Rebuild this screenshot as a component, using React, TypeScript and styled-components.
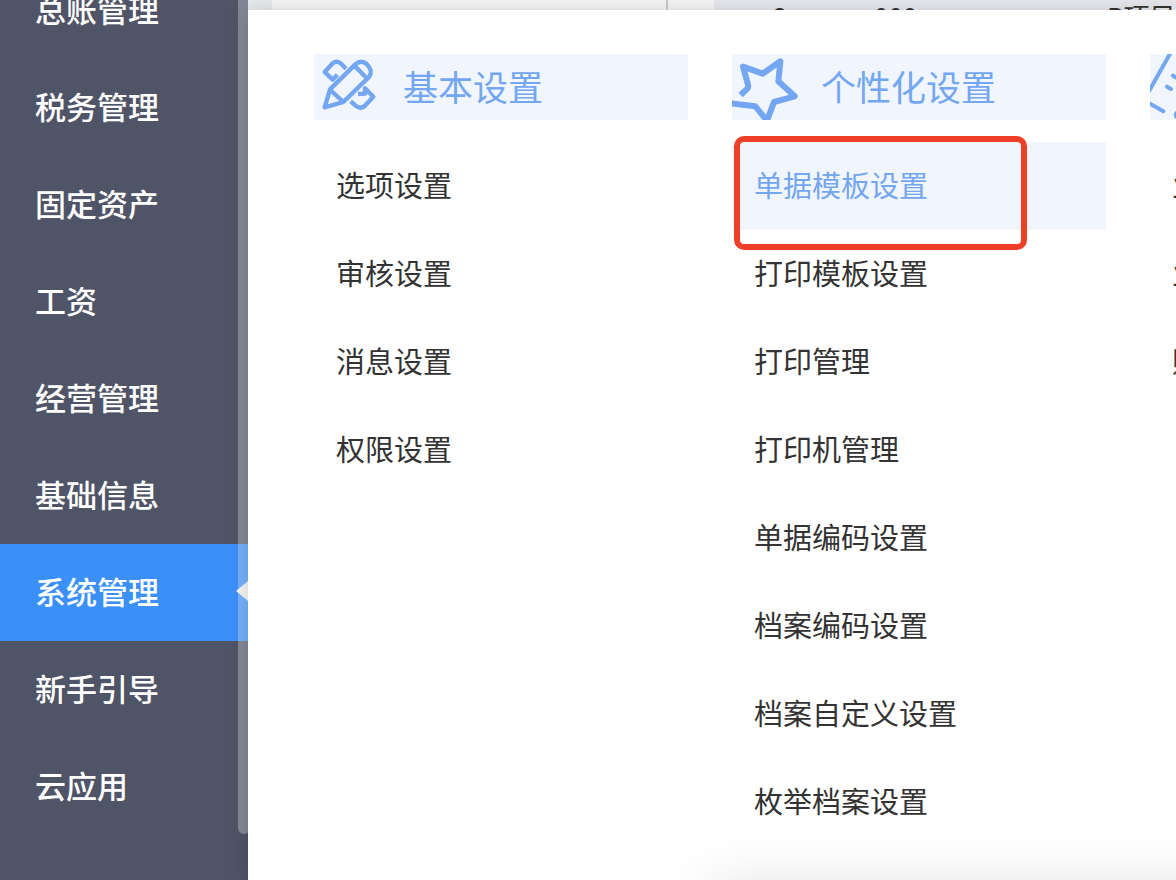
import React from 'react';
import styled, { createGlobalStyle } from 'styled-components';

const GlobalStyle = createGlobalStyle`
  * { box-sizing: border-box; }
  body {
    margin: 0;
    background: #fff;
    color: #333;
    font-family: "Noto Sans CJK SC", "Liberation Sans", sans-serif;
  }
  ul { list-style: none; margin: 0; padding: 0; }
  a { color: inherit; text-decoration: none; }
`;

const Shell = styled.div`
  display: flex;
  height: 100vh;
  overflow: hidden;
`;

const Sidebar = styled.nav`
  position: relative;
  flex: 0 0 248px;
  overflow: hidden;
  background: #505467;
`;

const NavList = styled.ul`
  margin-top: -38px;
`;

const NavLink = styled.a<{ $active?: boolean }>`
  position: relative;
  display: flex;
  align-items: center;
  height: 97px;
  padding: 0 0 4px 35px;
  font-size: 31px;
  font-weight: 500;
  line-height: 40px;
  color: #fff;
  background: ${(p) => (p.$active ? '#3b90f8' : 'transparent')};
`;

const Pointer = styled.span`
  position: absolute;
  right: 0;
  top: 37px;
  border: solid transparent;
  border-width: 10px 12px 10px 0;
  border-right-color: #f2f2f2;
`;

const ScrollThumb = styled.div`
  position: absolute;
  top: -20px;
  right: -2px;
  bottom: 46px;
  width: 12px;
  border-radius: 6px;
  background: rgba(255, 255, 255, 0.3);
`;

const Main = styled.main`
  flex: 1;
  min-width: 0;
  display: flex;
  flex-direction: column;
`;

const PageStrip = styled.div`
  display: flex;
  flex: 0 0 10px;
  overflow: hidden;
  background: #f8f8f8;
`;

const StripGutter = styled.div`
  flex: 0 0 24px;
  background: #e9eaed;
`;

const StripTree = styled.div`
  flex: 0 0 396px;
  border-right: 2px solid #ccc;
`;

const StripTable = styled.div`
  display: flex;
  flex: 1;
  margin-left: 46px;
  padding: 1px 0 0 59px;
  background: #e9eaef;
  font-size: 26px;
  line-height: 30px;
  white-space: nowrap;
`;

const StripCell = styled.span<{ $width: number }>`
  flex: 0 0 ${(p) => p.$width}px;
`;

const Panel = styled.section`
  position: relative;
  z-index: 1;
  flex: 1;
  display: flex;
  gap: 44px;
  padding: 44px 66px 0;
  background: #fff;
  box-shadow: 0 0 20px rgba(0, 0, 0, 0.16);
`;

const BottomShade = styled.div`
  position: absolute;
  left: 460px;
  right: -80px;
  bottom: -50px;
  height: 40px;
  border-radius: 20px;
  box-shadow: 0 0 60px rgba(0, 0, 0, 0.16);
`;

const Column = styled.section`
  flex: 0 0 374px;
`;

const ColumnTitle = styled.h2`
  display: flex;
  align-items: center;
  gap: 23px;
  height: 66px;
  margin: 0 0 22px;
  font-size: 35px;
  font-weight: 400;
  line-height: 44px;
  color: #74a6f2;
  background: #f0f5fe;
`;

const TitleText = styled.span`
  padding-bottom: 2px;
`;

const TitleIcon = styled.svg`
  width: 66px;
  height: 66px;
  fill: none;
  stroke: #74a6f2;
  stroke-linejoin: round;
`;

const Item = styled.li`
  position: relative;
`;

const ItemLink = styled.a<{ $active?: boolean }>`
  display: flex;
  align-items: center;
  height: 88px;
  padding: 0 0 4px 22px;
  font-size: 29px;
  line-height: 40px;
  white-space: nowrap;
  color: ${(p) => (p.$active ? '#74a6f2' : '#333')};
  background: ${(p) => (p.$active ? '#f0f5fe' : 'transparent')};
`;

const Highlight = styled.div`
  position: absolute;
  left: 2px;
  top: -6px;
  width: 293px;
  height: 114px;
  border: 6px solid #ee4027;
  border-radius: 10px;
  pointer-events: none;
`;

const PencilIcon = () => (
  <TitleIcon viewBox="42 30 198 198" strokeWidth="13" aria-hidden>
    <path d="M74 190 L90 136 L166 61 Q183 46 200 60 Q220 80 208 98 L130 174 Z" />
    <path d="M91 138 L130 174 M164 66 L200 102" />
    <path d="M138 74 L122 58 Q110 48 98 58 L74 84 L98 107 L112 92" />
    <path d="M152 172 L168 186 Q182 196 194 186 L220 158 L195 133 L195 149 L174 150" />
  </TitleIcon>
);

const StarIcon = () => (
  <TitleIcon viewBox="36 30 198 198" strokeWidth="18" aria-hidden>
    <path d="M62 153 L82 134 Q86 130 84 122 L69 68 L128 89 L181 52 L175 112 L224 157 L162 174 L141 230 L106 187 L30 178" />
  </TitleIcon>
);

const RulerIcon = () => (
  <TitleIcon viewBox="162 162 198 198" strokeWidth="12" strokeLinecap="round" aria-hidden>
    <path d="M158 275 L225 156 M213 260 L225 267 M231 227 L246 236 M158 309 L202 334" />
    <circle cx="247" cy="345" r="8" />
  </TitleIcon>
);

const navItems = [
  '总账管理', '税务管理', '固定资产', '工资', '经营管理',
  '基础信息', '系统管理', '新手引导', '云应用',
];
const activeNav = '系统管理';

const columns = [
  {
    title: '基本设置',
    Icon: PencilIcon,
    items: ['选项设置', '审核设置', '消息设置', '权限设置'],
  },
  {
    title: '个性化设置',
    Icon: StarIcon,
    items: [
      '单据模板设置', '打印模板设置', '打印管理', '打印机管理',
      '单据编码设置', '档案编码设置', '档案自定义设置', '枚举档案设置',
    ],
  },
  { title: '', Icon: RulerIcon, items: ['业', '业', '账'] },
];
const activeItem = '单据模板设置';

export default function App() {
  return (
    <>
      <GlobalStyle />
      <Shell>
        <Sidebar>
          <NavList>
            {navItems.map((name) => (
              <li key={name}>
                <NavLink href="#" $active={name === activeNav}>
                  {name}
                  {name === activeNav && <Pointer />}
                </NavLink>
              </li>
            ))}
          </NavList>
          <ScrollThumb />
        </Sidebar>
        <Main>
          <PageStrip>
            <StripGutter />
            <StripTree />
            <StripTable>
              <StripCell $width={101}>2</StripCell>
              <StripCell $width={233}>000</StripCell>
              <StripCell $width={80}>P项目</StripCell>
            </StripTable>
          </PageStrip>
          <Panel>
            {columns.map(({ title, Icon, items }, c) => (
              <Column key={c}>
                <ColumnTitle>
                  <Icon />
                  {title && <TitleText>{title}</TitleText>}
                </ColumnTitle>
                <ul>
                  {items.map((item, i) => (
                    <Item key={i}>
                      <ItemLink href="#" $active={item === activeItem}>{item}</ItemLink>
                      {item === activeItem && <Highlight />}
                    </Item>
                  ))}
                </ul>
              </Column>
            ))}
            <BottomShade />
          </Panel>
        </Main>
      </Shell>
    </>
  );
}
